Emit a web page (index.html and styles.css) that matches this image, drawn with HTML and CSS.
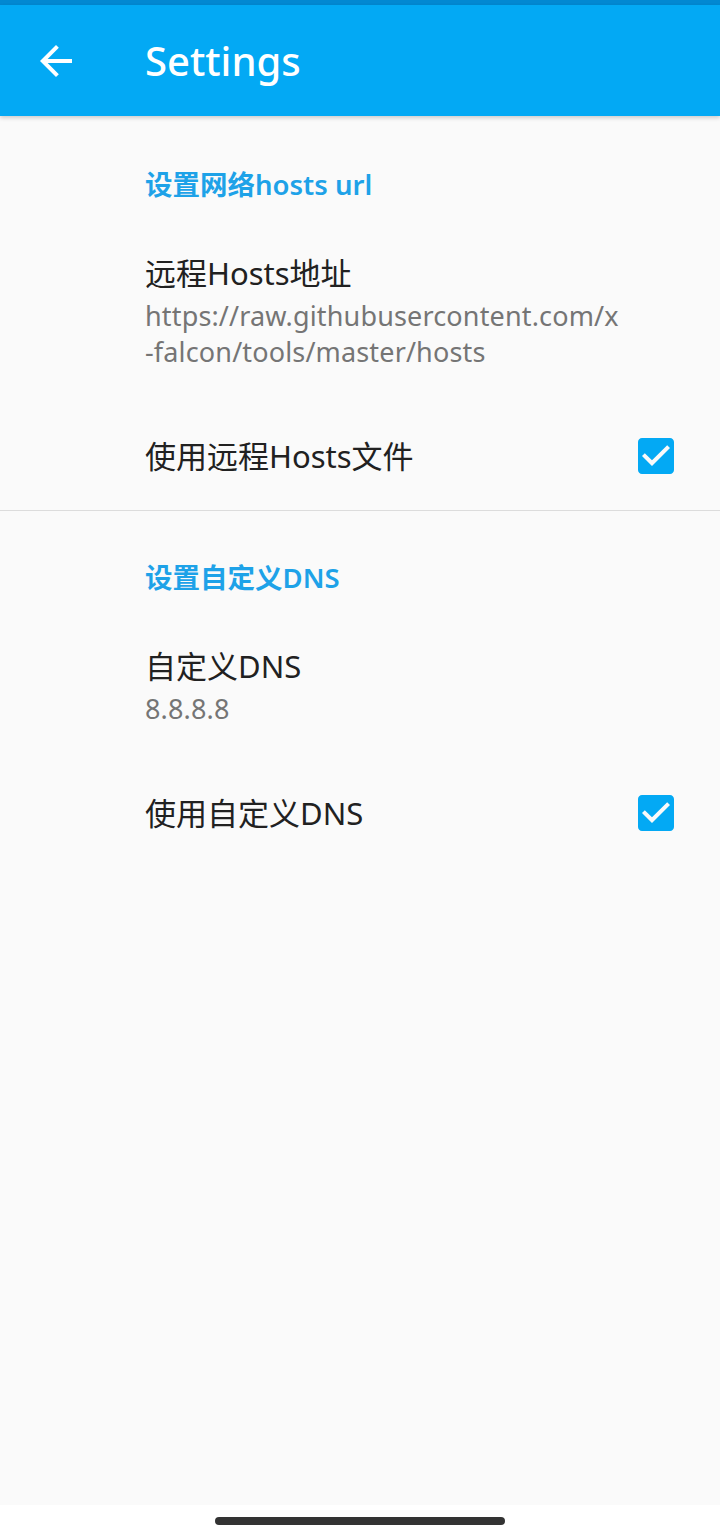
FILE: index.html
```html
<!DOCTYPE html>
<html lang="zh">
<head>
  <meta charset="UTF-8" />
  <meta name="viewport" content="width=device-width, initial-scale=1.0" />
  <title>Settings</title>
  <link rel="stylesheet" href="styles.css">
</head>
<body>
  <div class="status"></div>
  <header class="appbar">
    <svg class="back" viewBox="0 0 24 24" width="48" height="48">
      <path fill="#fff" d="M20 11H7.83l5.59-5.59L12 4l-8 8 8 8 1.41-1.41L7.83 13H20v-2z"/>
    </svg>
    <h1>Settings</h1>
  </header>

  <main class="list">
    <section class="category">
      <h2>设置网络hosts url</h2>
      <div class="pref">
        <div class="pref-text">
          <div class="pref-title">远程Hosts地址</div>
          <div class="pref-summary">https://raw.githubusercontent.com/x<br>-falcon/tools/master/hosts</div>
        </div>
      </div>
      <div class="pref pref-check">
        <div class="pref-text">
          <div class="pref-title">使用远程Hosts文件</div>
        </div>
        <svg class="checkbox" viewBox="0 0 24 24" width="48" height="48">
          <path fill="#03a9f4" d="M19 3H5c-1.11 0-2 .9-2 2v14c0 1.1.89 2 2 2h14c1.11 0 2-.9 2-2V5c0-1.1-.89-2-2-2zm-9 14l-5-5 1.41-1.41L10 14.17l7.59-7.59L19 8l-9 9z"/>
        </svg>
      </div>
    </section>

    <div class="divider"></div>

    <section class="category">
      <h2>设置自定义DNS</h2>
      <div class="pref">
        <div class="pref-text">
          <div class="pref-title">自定义DNS</div>
          <div class="pref-summary">8.8.8.8</div>
        </div>
      </div>
      <div class="pref pref-check">
        <div class="pref-text">
          <div class="pref-title">使用自定义DNS</div>
        </div>
        <svg class="checkbox" viewBox="0 0 24 24" width="48" height="48">
          <path fill="#03a9f4" d="M19 3H5c-1.11 0-2 .9-2 2v14c0 1.1.89 2 2 2h14c1.11 0 2-.9 2-2V5c0-1.1-.89-2-2-2zm-9 14l-5-5 1.41-1.41L10 14.17l7.59-7.59L19 8l-9 9z"/>
        </svg>
      </div>
    </section>
  </main>

  <div class="navbar">
    <div class="pill"></div>
  </div>
</body>
</html>
```

FILE: styles.css
```css
* {
  box-sizing: border-box;
}
body {
  margin: 0;
  height: 1537px;
  display: flex;
  flex-direction: column;
  background: #fafafa;
  font-family: "Noto Sans", "Noto Sans CJK SC", sans-serif;
  color: #212121;
}
.status {
  height: 5px;
  background: #0288d1;
}
.appbar {
  height: 111px;
  background: #03a9f4;
  display: flex;
  align-items: center;
  box-shadow: 0 2px 4px rgba(0,0,0,0.18);
  position: relative;
  z-index: 1;
}
.back {
  margin-left: 32px;
}
.appbar h1 {
  margin: 0 0 0 65px;
  color: white;
  font-size: 40px;
  font-weight: 500;
}
.list {
  flex: 1;
  padding-top: 2px;
}
.category h2 {
  margin: 0;
  padding: 49px 0 0 145px;
  font-size: 27.5px;
  line-height: 36px;
  font-weight: 600;
  color: #1ea2e8;
}
.pref {
  display: flex;
  align-items: center;
  padding: 49px 40px 32px 145px;
}
.pref-check {
  padding-top: 33px;
  padding-bottom: 33px;
}
.pref-text {
  flex: 1;
}
.pref-title {
  font-size: 31px;
  line-height: 42px;
}
.pref-summary {
  margin-top: 4px;
  font-size: 27px;
  line-height: 36px;
  letter-spacing: 0.15px;
  color: #757575;
}
.checkbox {
  margin: -3px 0;
}
.divider {
  height: 1px;
  background: #dcdcdc;
}
.navbar {
  height: 32px;
  background: white;
  display: flex;
  justify-content: center;
  padding-top: 12px;
}
.pill {
  width: 290px;
  height: 8px;
  border-radius: 4px;
  background: #333;
}
```
